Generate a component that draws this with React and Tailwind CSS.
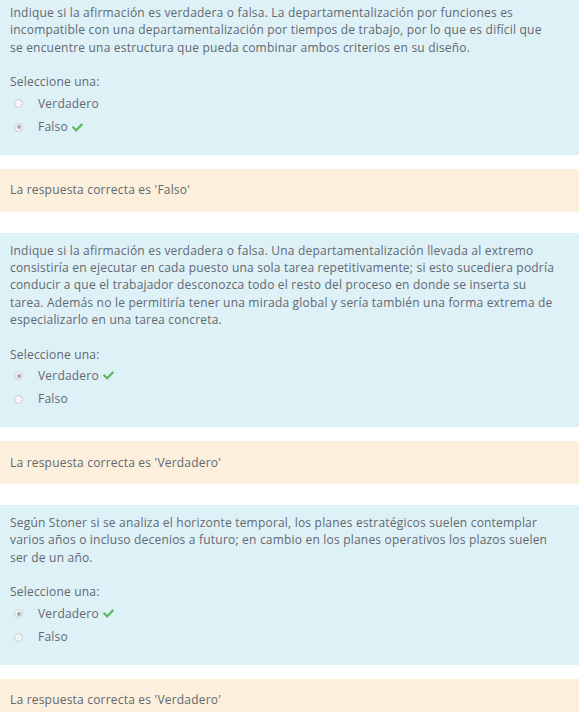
import React from 'react';
import { FaCheck } from 'react-icons/fa';

const questions = [
  {
    lines: [
      'Indique si la afirmación es verdadera o falsa. La departamentalización por funciones es',
      'incompatible con una departamentalización por tiempos de trabajo, por lo que es difícil que',
      'se encuentre una estructura que pueda combinar ambos criterios en su diseño.',
    ],
    selected: 'Falso',
    answer: 'Falso',
  },
  {
    lines: [
      'Indique si la afirmación es verdadera o falsa. Una departamentalización llevada al extremo',
      'consistiría en ejecutar en cada puesto una sola tarea repetitivamente; si esto sucediera podría',
      'conducir a que el trabajador desconozca todo el resto del proceso en donde se inserta su',
      'tarea. Además no le permitiría tener una mirada global y sería también una forma extrema de',
      'especializarlo en una tarea concreta.',
    ],
    selected: 'Verdadero',
    answer: 'Verdadero',
  },
  {
    lines: [
      'Según Stoner si se analiza el horizonte temporal, los planes estratégicos suelen contemplar',
      'varios años o incluso decenios a futuro; en cambio en los planes operativos los plazos suelen',
      'ser de un año.',
    ],
    selected: 'Verdadero',
    answer: 'Verdadero',
  },
];

// little grey radio like the browser default, disabled look
function Radio({ checked }) {
  return (
    <span className="w-[9px] h-[9px] rounded-full border border-[#c9cdd0] bg-[#f3f5f6] flex items-center justify-center">
      {checked && <span className="w-[4px] h-[4px] rounded-full bg-[#a4a9ad]" />}
    </span>
  );
}

function Question({ q }) {
  return (
    <div>
      <div className="bg-[#def1f7] px-[10px] pt-[9px] pb-[16px]">
        <p className="leading-[17.25px]">
          {q.lines.map((l, i) => (
            <React.Fragment key={i}>
              {l}
              {i < q.lines.length - 1 && <br />}
            </React.Fragment>
          ))}
        </p>
        <div className="mt-[17.5px] leading-[17.5px]">Seleccione una:</div>
        <div className="mt-[1px]">
          {['Verdadero', 'Falso'].map((opt) => (
            <div key={opt} className="h-[23.5px] flex items-center">
              <span className="w-[28px] pl-[4px] flex items-center">
                <Radio checked={q.selected === opt} />
              </span>
              <span>{opt}</span>
              {q.selected === opt && <FaCheck className="ml-[4px] text-[#5cb85c] w-[11px] h-[11px]" />}
            </div>
          ))}
        </div>
      </div>
      <div className="mt-[14px] h-[43px] bg-[#fcefdc] px-[10px] flex items-center">
        La respuesta correcta es '{q.answer}'
      </div>
    </div>
  );
}

export default function App() {
  return (
    <div
      className="w-[579px] -mt-[5px] text-[12px] tracking-[0.2px] text-[#626870] flex flex-col gap-[21px]"
      style={{ fontFamily: '"Open Sans", "Liberation Sans", sans-serif' }}
    >
      {questions.map((q, i) => (
        <Question key={i} q={q} />
      ))}
    </div>
  );
}
